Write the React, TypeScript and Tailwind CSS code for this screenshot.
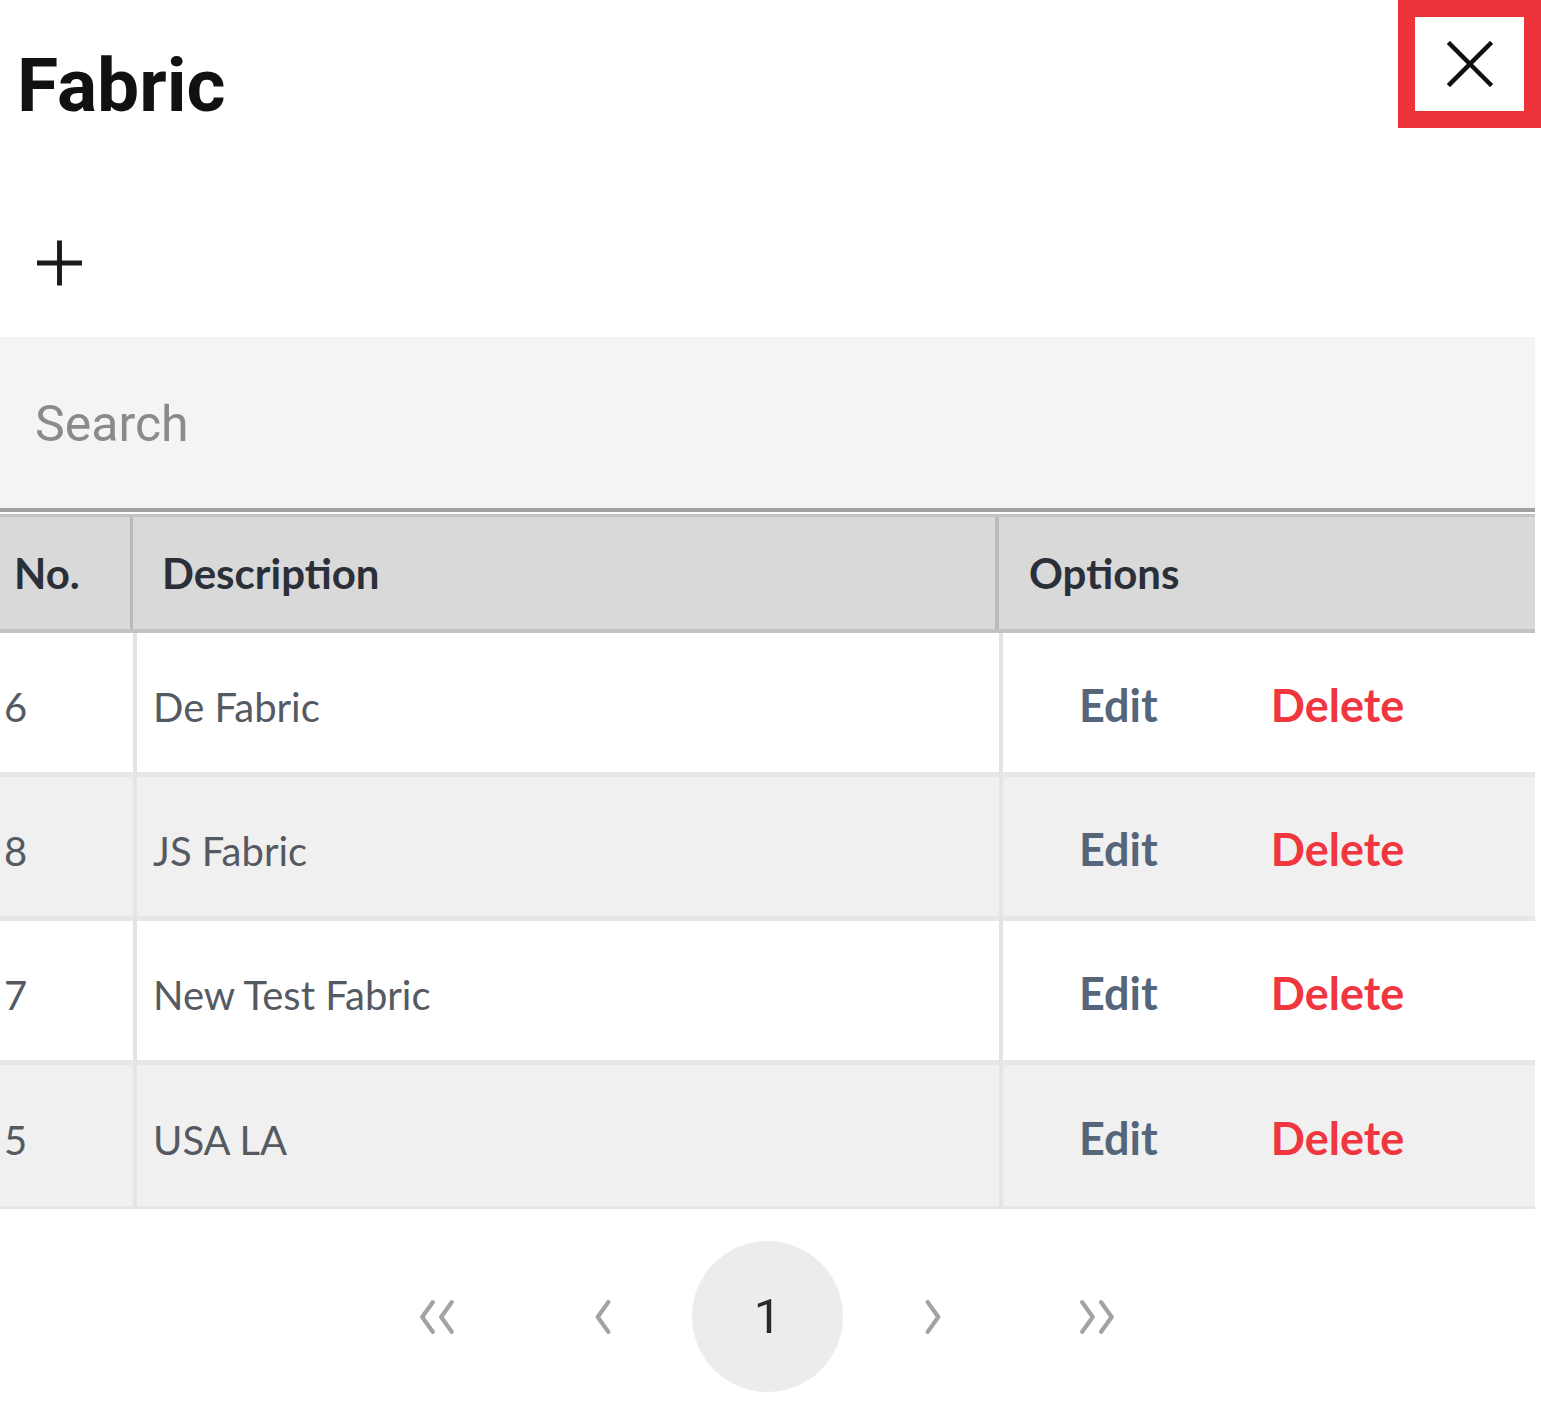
import React from 'react';

interface FabricRow {
  id: number;
  description: string;
}

const rows: FabricRow[] = [
  { id: 6, description: 'De Fabric' },
  { id: 8, description: 'JS Fabric' },
  { id: 7, description: 'New Test Fabric' },
  { id: 5, description: 'USA LA' },
];

const roboto = { fontFamily: 'Roboto, "Liberation Sans", sans-serif' };
const lato = { fontFamily: 'Lato, "Open Sans", "Liberation Sans", sans-serif' };

const Chevron: React.FC<{ dir: 'left' | 'right'; double?: boolean }> = ({ dir, double }) => {
  const paths = double
    ? dir === 'left'
      ? ['M14 2 L4 16 L14 30', 'M32 2 L22 16 L32 30']
      : ['M4 2 L14 16 L4 30', 'M22 2 L32 16 L22 30']
    : dir === 'left'
      ? ['M14 2 L4 16 L14 30']
      : ['M4 2 L14 16 L4 30'];
  return (
    <svg
      width={double ? 40 : 20}
      height={34}
      viewBox={double ? '0 0 38 32' : '0 0 18 32'}
      fill="none"
      stroke="#9fa4a9"
      strokeWidth={4}
      strokeLinecap="round"
      strokeLinejoin="round"
    >
      {paths.map(d => (
        <path key={d} d={d} />
      ))}
    </svg>
  );
};

export default function App() {
  return (
    <div className="w-[1541px] h-[1410px] bg-white overflow-hidden">
      {/* header */}
      <div className="flex justify-between items-start h-[128px]">
        <h1
          className="pt-[48px] pl-[17px] text-[75px] leading-none font-bold text-[#111]"
          style={roboto}
        >
          Fabric
        </h1>
        <button className="w-[143px] h-[128px] border-[17px] border-[#ee3239] bg-white flex items-center justify-center">
          <svg width="46" height="46" viewBox="0 0 46 46" stroke="#111" strokeWidth="4.5" strokeLinecap="square">
            <path d="M3 3 L43 43 M43 3 L3 43" />
          </svg>
        </button>
      </div>

      {/* add */}
      <div className="mt-[112px] pl-[37px] h-[45px]">
        <button className="w-[45px] h-[45px] flex items-center justify-center">
          <svg width="46" height="46" viewBox="0 0 46 46" stroke="#1a1a1a" strokeWidth="5">
            <path d="M23 0 V46 M0 23 H46" />
          </svg>
        </button>
      </div>

      <div className="w-[1535px] mt-[52px]">
        {/* search */}
        <div className="h-[175px] bg-[#f4f4f4] border-b-[4px] border-[#a2a2a2] flex items-center px-[35px]">
          <span className="text-[50px] text-[#8a8a8a] pt-[4px]" style={roboto}>
            Search
          </span>
        </div>

        {/* table header */}
        <div
          className="mt-[2px] h-[119px] flex bg-[#d9d9d9] border-t-[3px] border-b-[4px] border-[#c6c2c2] text-[42px] font-bold text-[#2b2f38]"
          style={lato}
        >
          <div className="w-[133px] flex items-center pl-[14px] border-r-[3px] border-[#bdb9b9]">No.</div>
          <div className="w-[866px] flex items-center pl-[29px] border-r-[4px] border-[#bdb9b9]">Description</div>
          <div className="flex-1 flex items-center pl-[30px]">Options</div>
        </div>

        {/* rows */}
        {rows.map((row, i) => (
          <div
            key={row.id}
            className={`flex h-[144px] ${i === rows.length - 1 ? 'border-b-[3px]' : 'border-b-[5px]'} border-[#e6e6e6] ${
              i % 2 === 1 ? 'bg-[#f0f0f0]' : 'bg-white'
            }`}
            style={lato}
          >
            <div className="w-[137px] flex items-center pl-[4px] pt-[8px] border-r-[4px] border-[#e4e4e4] text-[40px] text-[#555a62]">
              {row.id}
            </div>
            <div className="w-[866px] flex items-center pl-[16px] pt-[8px] border-r-[4px] border-[#e4e4e4] text-[40px] text-[#555a62]">
              {row.description}
            </div>
            <div className="flex-1 flex items-center pl-[76px] pt-[6px] text-[45px] font-bold">
              <button className="text-[#56667a]">Edit</button>
              <button className="ml-[113px] text-[#f0363e]">Delete</button>
            </div>
          </div>
        ))}

        {/* pagination */}
        <div className="mt-[32px] flex justify-center gap-[14px]" style={roboto}>
          <button className="w-[151px] h-[151px] flex items-center justify-center">
            <Chevron dir="left" double />
          </button>
          <button className="w-[151px] h-[151px] flex items-center justify-center">
            <Chevron dir="left" />
          </button>
          <button className="w-[151px] h-[151px] rounded-full bg-[#ececec] flex items-center justify-center text-[49px] text-[#2a2a2a]">
            1
          </button>
          <button className="w-[151px] h-[151px] flex items-center justify-center">
            <Chevron dir="right" />
          </button>
          <button className="w-[151px] h-[151px] flex items-center justify-center">
            <Chevron dir="right" double />
          </button>
        </div>
      </div>
    </div>
  );
}
